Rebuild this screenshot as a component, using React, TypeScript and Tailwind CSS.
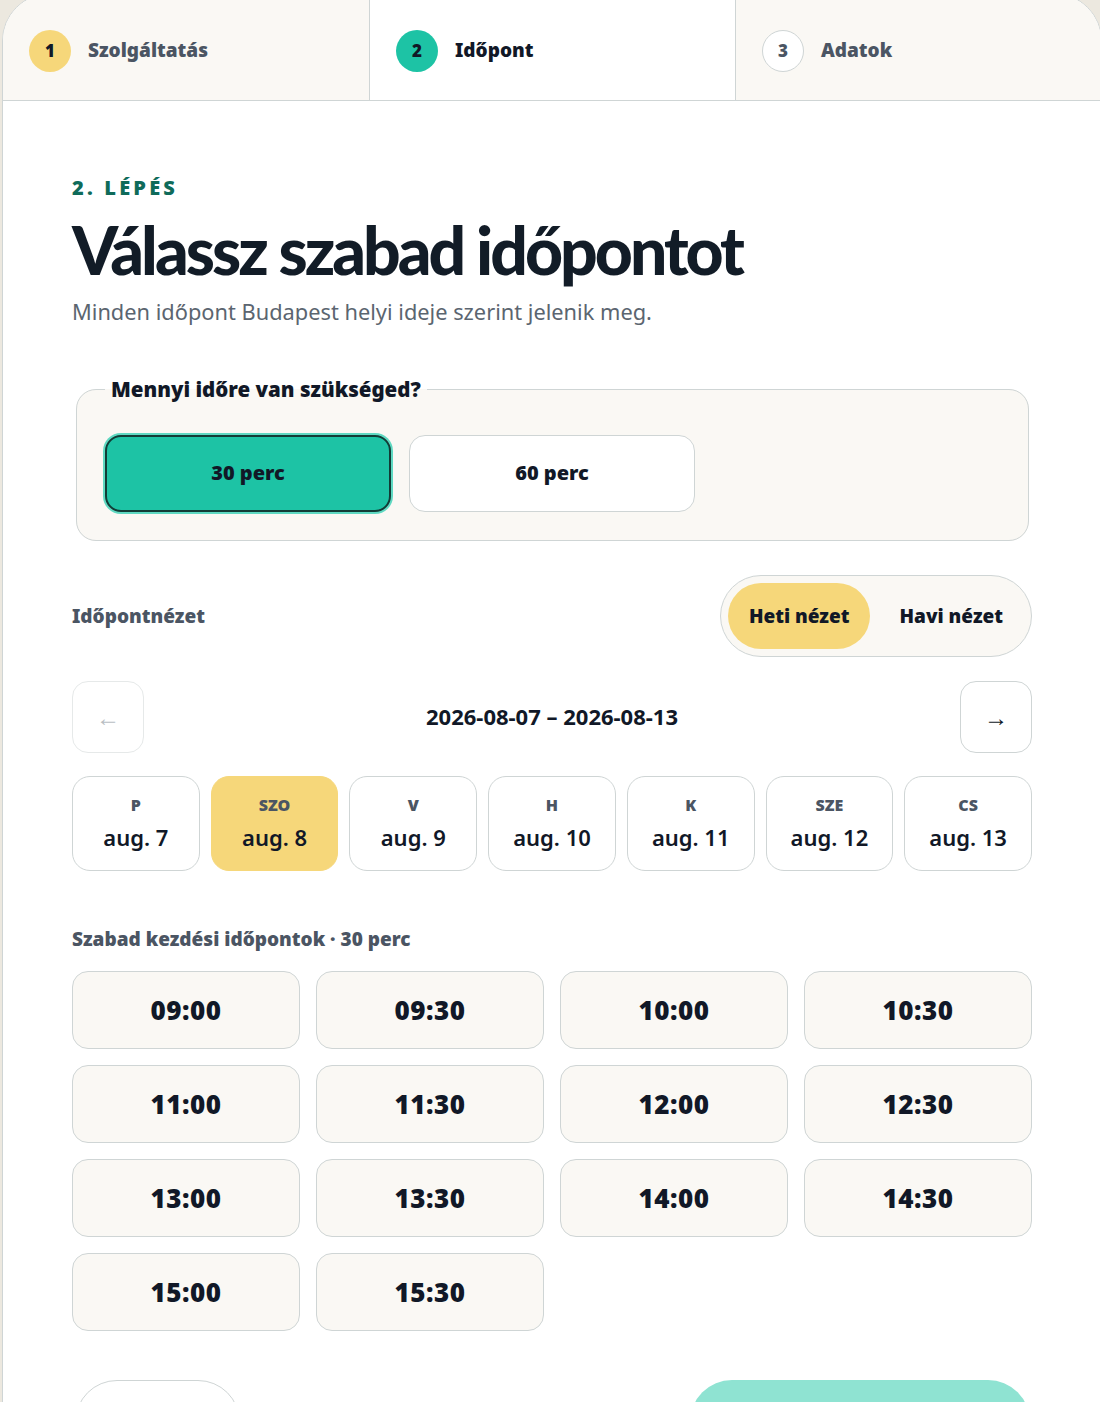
import { useState } from 'react';

const steps = [
  { n: 1, label: 'Szolgáltatás' },
  { n: 2, label: 'Időpont' },
  { n: 3, label: 'Adatok' },
];

const days = [
  { d: 'P', date: 'aug. 7' },
  { d: 'SZO', date: 'aug. 8' },
  { d: 'V', date: 'aug. 9' },
  { d: 'H', date: 'aug. 10' },
  { d: 'K', date: 'aug. 11' },
  { d: 'SZE', date: 'aug. 12' },
  { d: 'CS', date: 'aug. 13' },
];

const slots = [
  '09:00', '09:30', '10:00', '10:30',
  '11:00', '11:30', '12:00', '12:30',
  '13:00', '13:30', '14:00', '14:30',
  '15:00', '15:30',
];

const lato = "font-['Lato','Noto_Sans',sans-serif]";
const noto = "font-['Noto_Sans','Open_Sans',sans-serif]";

export default function App() {
  const [duration, setDuration] = useState<30 | 60>(30);
  const [view, setView] = useState<'week' | 'month'>('week');
  const [day, setDay] = useState(1);

  return (
    <div className="min-h-screen overflow-hidden bg-[#ece8df]">
      <div className="ml-[2px] -mt-[7px] w-[1100px] rounded-t-[48px] border border-[#cfd5d5] bg-white overflow-hidden">
        {/* steps */}
        <div className="grid grid-cols-3 border-b border-[#cfd5d5]">
          {steps.map((s, i) => {
            const active = s.n === 2;
            return (
              <div
                key={s.n}
                className={`flex h-[106px] items-center gap-[17px] pl-[26px] pt-[7px] ${noto} ${i > 0 ? 'border-l border-[#cfd5d5]' : ''} ${active ? 'bg-white' : 'bg-[#faf8f4]'}`}
              >
                <span
                  className={`flex h-[42px] w-[42px] items-center justify-center rounded-full text-[17px] font-black ${
                    s.n === 1
                      ? 'bg-[#f6d77a] text-[#111827]'
                      : s.n === 2
                        ? 'bg-[#1dc3a5] text-[#111827]'
                        : 'border border-[#cfd5d5] bg-white text-[#4b5563]'
                  }`}
                >
                  {s.n}
                </span>
                <span className={`text-[19px] font-black ${active ? 'text-[#111827]' : 'text-[#4b5563]'}`}>
                  {s.label}
                </span>
              </div>
            );
          })}
        </div>

        <div className={`px-[69px] pt-[75px] pb-[40px] ${noto}`}>
          <p className="text-[20px] leading-[24px] font-black tracking-[0.16em] text-[#0f6b5a]">2. LÉPÉS</p>
          <h1 className={`mt-[14px] text-[66px] leading-[72px] font-black tracking-[-0.045em] text-[#121c27] ${lato}`}>
            Válassz szabad időpontot
          </h1>
          <p className="mt-[11px] text-[21.8px] leading-[30px] text-[#5b6570]">
            Minden időpont Budapest helyi ideje szerint jelenik meg.
          </p>

          <fieldset className="mt-[47px] ml-[4px] mr-[3px] rounded-[20px] border border-[#cfd5d5] bg-[#faf8f4] px-[28px] pb-[28px] pt-[30px]">
            <legend className="px-[6px] text-[20.5px] font-black text-[#111827]">Mennyi időre van szükséged?</legend>
            <div className="flex gap-[18px]">
              {([30, 60] as const).map(m => (
                <button
                  key={m}
                  onClick={() => setDuration(m)}
                  className={`h-[77px] w-[286px] rounded-[16px] text-[20px] font-black text-[#111827] ${
                    duration === m
                      ? 'border-2 border-[#123c36] bg-[#1dc3a5] shadow-[0_0_0_2px_#5fd9c2]'
                      : 'border border-[#cfd5d5] bg-white'
                  }`}
                >
                  {m} perc
                </button>
              ))}
            </div>
          </fieldset>

          <div className="mt-[34px] flex items-center justify-between">
            <span className="text-[19px] font-black text-[#4b5563]">Időpontnézet</span>
            <div className="flex h-[82px] items-center gap-[8px] rounded-full border border-[#cfd5d5] bg-[#faf8f4] px-[7px]">
              <button
                onClick={() => setView('week')}
                className={`h-[66px] rounded-full px-[21px] text-[19px] font-black text-[#111827] ${view === 'week' ? 'bg-[#f6d77a]' : ''}`}
              >
                Heti nézet
              </button>
              <button
                onClick={() => setView('month')}
                className={`h-[66px] rounded-full px-[21px] text-[19px] font-black text-[#111827] ${view === 'month' ? 'bg-[#f6d77a]' : ''}`}
              >
                Havi nézet
              </button>
            </div>
          </div>

          <div className="mt-[24px] flex items-center justify-between">
            <button className="flex h-[72px] w-[72px] items-center justify-center rounded-[16px] border border-[#e6e9e9] bg-white text-[24px] text-[#b8bec3]">
              ←
            </button>
            <span className="text-[22px] font-bold text-[#111827]">2026-08-07 – 2026-08-13</span>
            <button className="flex h-[72px] w-[72px] items-center justify-center rounded-[16px] border border-[#cfd5d5] bg-white text-[24px] text-[#111827]">
              →
            </button>
          </div>

          <div className="mt-[23px] grid grid-cols-7 gap-[11px]">
            {days.map((x, i) => (
              <button
                key={x.d}
                onClick={() => setDay(i)}
                className={`flex h-[95px] flex-col items-center justify-center rounded-[18px] border ${
                  day === i ? 'border-[#f6d77a] bg-[#f6d77a]' : 'border-[#cfd5d5] bg-white'
                }`}
              >
                <span className="text-[16px] leading-[20px] font-black text-[#4b5563]">{x.d}</span>
                <span className="mt-[8px] text-[22px] leading-[28px] font-semibold text-[#111827]">{x.date}</span>
              </button>
            ))}
          </div>

          <p className="mt-[54px] text-[19px] font-black text-[#4b5563]">Szabad kezdési időpontok · 30 perc</p>

          <div className="mt-[18px] grid grid-cols-4 gap-x-[16px] gap-y-[16px]">
            {slots.map(t => (
              <button
                key={t}
                className="h-[78px] rounded-[16px] border border-[#cfd5d5] bg-[#faf8f4] text-[26px] font-black tracking-[0.02em] text-[#111827]"
              >
                {t}
              </button>
            ))}
          </div>

          <div className="mt-[49px] flex items-start justify-between">
            <button className="ml-[3px] flex h-[84px] w-[165px] items-center justify-center rounded-full border border-[#cfd5d5] bg-white text-[19px] leading-[24px] font-black text-[#111827]">
              ← Vissza
            </button>
            <button className="mr-[2px] flex h-[84px] w-[340px] items-center justify-center rounded-full bg-[#8fe3d2] text-[19px] leading-[24px] font-black text-[#111827]">
              Tovább
            </button>
          </div>
        </div>
      </div>
    </div>
  );
}
